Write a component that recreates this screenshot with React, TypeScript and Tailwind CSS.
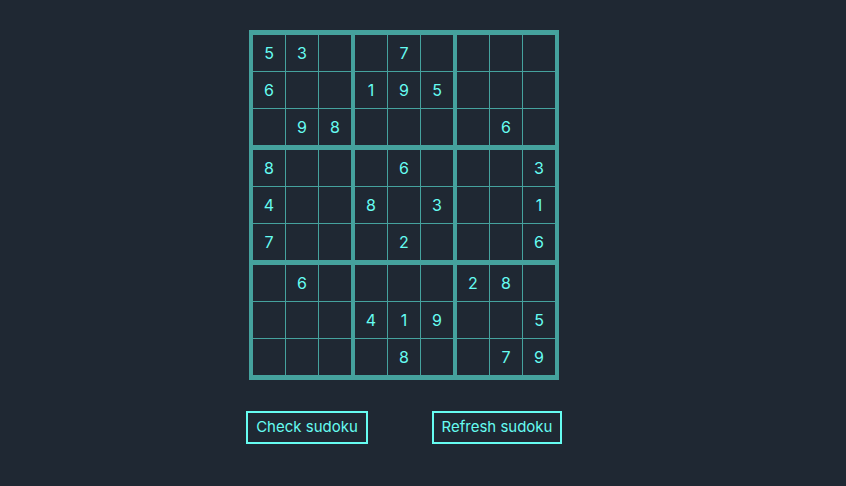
import React from 'react';

const puzzle: (number | null)[][] = [
  [5, 3, null, null, 7, null, null, null, null],
  [6, null, null, 1, 9, 5, null, null, null],
  [null, 9, 8, null, null, null, null, 6, null],
  [8, null, null, null, 6, null, null, null, 3],
  [4, null, null, 8, null, 3, null, null, 1],
  [7, null, null, null, 2, null, null, null, 6],
  [null, 6, null, null, null, null, 2, 8, null],
  [null, null, null, 4, 1, 9, null, null, 5],
  [null, null, null, null, 8, null, null, 7, 9],
];

const Box: React.FC<{ br: number; bc: number }> = ({ br, bc }) => (
  <div className="grid grid-cols-3 gap-px">
    {Array.from({ length: 9 }).map((_, i) => {
      const r = br * 3 + Math.floor(i / 3);
      const c = bc * 3 + (i % 3);
      const v = puzzle[r][c];
      return (
        <div key={i} className="w-[32px] h-[36px] bg-[#1f2833] flex items-center justify-center text-[16px] text-[#66fcf1]">
          {v ?? ''}
        </div>
      );
    })}
  </div>
);

export default function App() {
  return (
    <div className="min-h-[486px] w-full bg-[#1f2833] pt-[30px] pl-[246px] font-['Inter','Lato',sans-serif]">
      <div className="ml-[3px] inline-grid grid-cols-3 gap-x-[4px] gap-y-[5px] bg-[#45a29e] px-[4px] py-[5px]">
        {Array.from({ length: 9 }).map((_, i) => (
          <Box key={i} br={Math.floor(i / 3)} bc={i % 3} />
        ))}
      </div>
      <div className="flex gap-[64px] mt-[31px]">
        <button className="h-[33px] w-[122px] border-2 border-[#66fcf1] text-[#66fcf1] text-[15px]">Check sudoku</button>
        <button className="h-[33px] w-[130px] border-2 border-[#66fcf1] text-[#66fcf1] text-[15px]">Refresh sudoku</button>
      </div>
    </div>
  );
}
